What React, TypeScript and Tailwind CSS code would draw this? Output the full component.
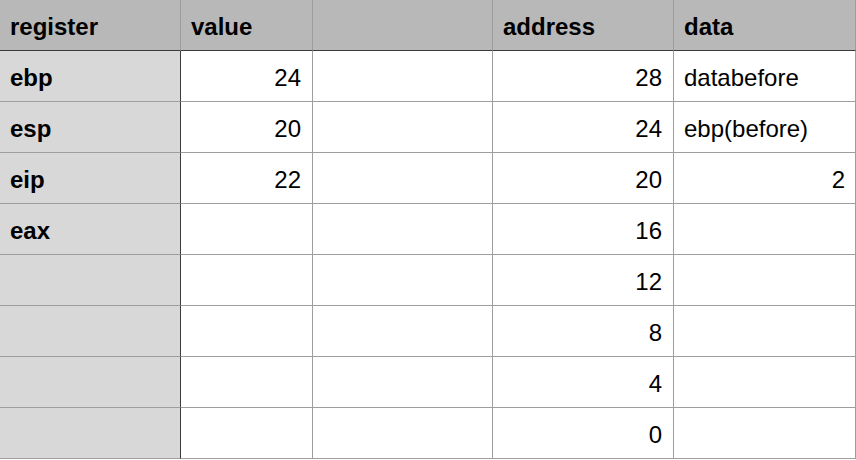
import React from 'react';

type Row = { reg: string; value: string; address: string; data: string; dataRight?: boolean };

const rows: Row[] = [
  { reg: 'ebp', value: '24', address: '28', data: 'databefore' },
  { reg: 'esp', value: '20', address: '24', data: 'ebp(before)' },
  { reg: 'eip', value: '22', address: '20', data: '2', dataRight: true },
  { reg: 'eax', value: '', address: '16', data: '' },
  { reg: '', value: '', address: '12', data: '' },
  { reg: '', value: '', address: '8', data: '' },
  { reg: '', value: '', address: '4', data: '' },
  { reg: '', value: '', address: '0', data: '' },
];

const cell = 'h-[51px] flex items-center pt-[4px] border-b border-r border-[#9e9e9e] text-[24px]';

export default function App() {
  return (
    <div className="w-[856px] h-[460px] bg-white font-['Liberation_Sans',Arial,sans-serif] text-black overflow-hidden">
      <div className="grid grid-cols-[181px_132px_180px_181px_182px]">
        {/* header */}
        <div className={`${cell} bg-[#b8b8b8] font-bold px-[10px] border-b-[#3a3a3a]`}>register</div>
        <div className={`${cell} bg-[#b8b8b8] font-bold px-[10px] border-b-[#3a3a3a]`}>value</div>
        <div className={`${cell} bg-[#b8b8b8] border-b-[#3a3a3a]`} />
        <div className={`${cell} bg-[#b8b8b8] font-bold px-[10px] border-b-[#3a3a3a]`}>address</div>
        <div className={`${cell} bg-[#b8b8b8] font-bold px-[10px] border-b-[#3a3a3a]`}>data</div>

        {rows.map((r, i) => (
          <React.Fragment key={i}>
            <div className={`${cell} bg-[#d8d8d8] font-bold px-[10px] border-r-[#3a3a3a]`}>{r.reg}</div>
            <div className={`${cell} justify-end pr-[11px]`}>{r.value}</div>
            <div className={cell} />
            <div className={`${cell} justify-end pr-[11px]`}>{r.address}</div>
            <div className={`${cell} ${r.dataRight ? 'justify-end pr-[10px]' : 'pl-[10px]'}`}>{r.data}</div>
          </React.Fragment>
        ))}
      </div>
    </div>
  );
}
